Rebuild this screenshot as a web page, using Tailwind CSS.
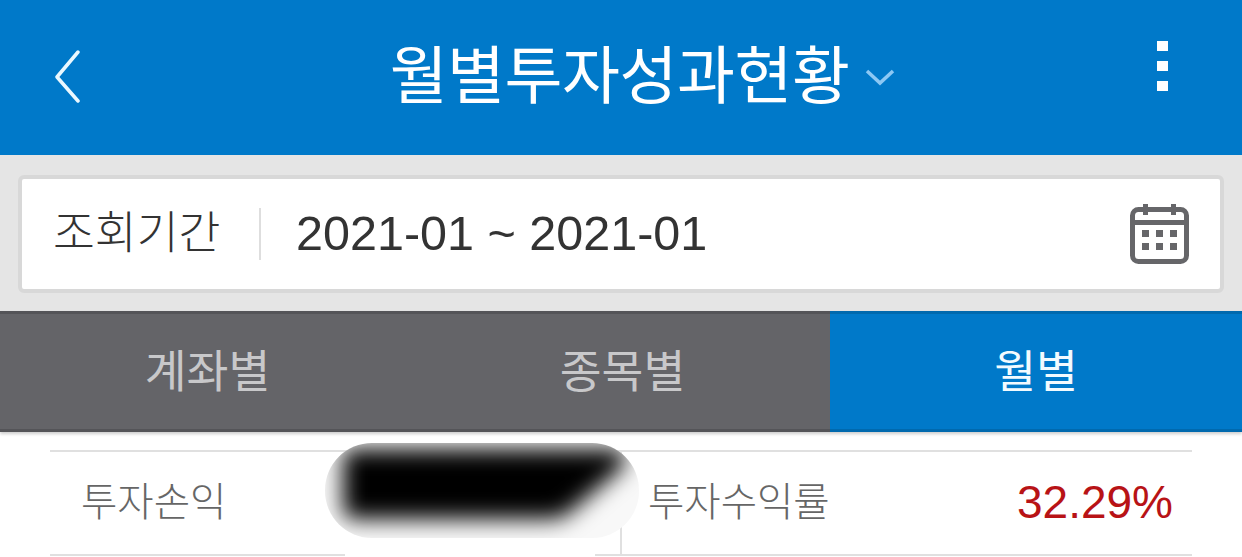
<!DOCTYPE html>
<html lang="ko">
<head>
  <meta charset="UTF-8" />
  <meta name="viewport" content="width=device-width, initial-scale=1" />
  <title>월별투자성과현황</title>
  <script src="https://cdn.jsdelivr.net/npm/@tailwindcss/browser@4"></script>
</head>
<body class="h-[557px] overflow-hidden bg-white font-['Liberation_Sans','Noto_Sans_CJK_KR',sans-serif]">
  <!-- Header -->
  <header class="h-[155px] bg-[#0079c9] flex items-center justify-between pl-[54px] pr-[74px] pb-[8px] text-white">
    <svg class="w-[28px] h-[54px] mt-[7px]" viewBox="0 0 28 54" fill="none" stroke="#eaf8ff" stroke-width="3.5" stroke-linecap="round" stroke-linejoin="round">
      <path d="M24 2 L3 27 L24 51" />
    </svg>
    <div class="flex items-center ml-[46px] mt-[5px]">
      <h1 class="text-[63px] leading-none tracking-[-0.5px]">월별투자성과현황</h1>
      <svg class="w-[30px] h-[18px] ml-[16px] mt-[2px]" viewBox="0 0 30 18" fill="none" stroke="#8cc8f4" stroke-width="3.5">
        <path d="M2 3 L15 15 L28 3" />
      </svg>
    </div>
    <div class="flex flex-col gap-[10px] mt-[-15px]">
      <span class="w-[11px] h-[10px] bg-white"></span>
      <span class="w-[11px] h-[10px] bg-white"></span>
      <span class="w-[11px] h-[10px] bg-white"></span>
    </div>
  </header>

  <!-- Period -->
  <section class="h-[156px] bg-[#e5e5e5] px-[18px] pt-[20px]">
    <div class="h-[118px] bg-white border-[4px] border-[#d8d8d8] rounded-[6px] flex items-center pl-[31px] pr-[30px]">
      <span class="w-[206px] text-[45.5px] leading-none font-light text-[#333]">조회기간</span>
      <span class="w-[2px] h-[52px] bg-[#dedede]"></span>
      <span class="ml-[35px] pb-[2px] text-[48.5px] leading-none text-[#333]">2021-01 ~ 2021-01</span>
      <svg class="ml-auto w-[60px] h-[60px]" viewBox="0 0 60 60" fill="#666669">
        <rect x="2.5" y="5.5" width="54" height="52" rx="6" fill="none" stroke="#666669" stroke-width="5" />
        <rect x="2" y="16" width="55" height="5" />
        <rect x="13" y="0" width="5" height="11" /><rect x="41" y="0" width="5" height="11" />
        <rect x="12" y="26" width="7" height="7" /><rect x="26" y="26" width="7" height="7" /><rect x="40" y="26" width="7" height="7" />
        <rect x="12" y="39" width="7" height="7" /><rect x="26" y="39" width="7" height="7" /><rect x="40" y="39" width="7" height="7" />
      </svg>
    </div>
  </section>

  <!-- Tabs -->
  <nav class="h-[121px] flex text-[45.5px] leading-none shadow-[0_2px_3px_rgba(0,0,0,0.2)]">
    <div class="w-[415px] bg-[#646468] border-y-[3px] border-[#545458] text-[#c8c8ca] flex items-center justify-center pt-[3px]">계좌별</div>
    <div class="w-[415px] bg-[#646468] border-y-[3px] border-[#545458] text-[#c8c8ca] flex items-center justify-center pt-[3px]">종목별</div>
    <div class="flex-1 bg-[#0079c9] border-y-[3px] border-[#0069ae] text-[#f2fbff] flex items-center justify-center pt-[3px]">월별</div>
  </nav>

  <!-- Result row -->
  <section class="relative mx-[50px] mt-[18px] h-[106px] border-y-2 border-[#e0e0e0] flex items-center text-[#666]">
    <div class="w-[570px] pl-[31px] flex items-center h-full text-[39.5px] font-light">투자손익</div>
    <div class="flex-1 h-full border-l-2 border-[#e0e0e0] flex items-center justify-between pl-[26px] pr-[19px]">
      <span class="text-[39.5px] font-light">투자수익률</span>
      <span class="pb-[2px] text-[46px] leading-none text-[#b81316]">32.29%</span>
    </div>
    <!-- masked value -->
    <div class="absolute left-[275px] top-[-9px] w-[314px] h-[95px] rounded-[47px] bg-[#f8f8f8] overflow-hidden">
      <svg class="absolute inset-0 w-full h-full blur-[11px]" viewBox="0 0 314 95">
        <path d="M26 6 H295 Q304 14 298 24 L246 68 Q238 76 226 76 H28 Q18 76 18 66 V16 Q18 6 26 6 Z" fill="#000" />
      </svg>
    </div>
    <!-- white smear below the mask -->
    <div class="absolute left-[295px] top-[86px] w-[250px] h-[20px] bg-white"></div>
  </section>
</body>
</html>
